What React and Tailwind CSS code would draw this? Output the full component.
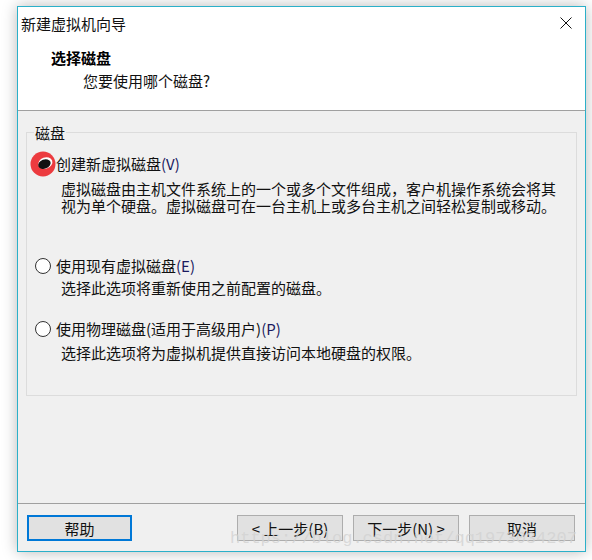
import React from 'react'

const FONT = { fontFamily: '"Noto Sans CJK SC", "Noto Sans", sans-serif' }

function Radio() {
  return <span className="w-[16px] h-[16px] rounded-full border border-[#333333] bg-white shrink-0" />
}

function Marked() {
  // red annotation circle drawn over the selected radio
  return (
    <span className="relative w-[16px] h-[16px] shrink-0">
      <svg className="absolute -left-[5px] -top-[5px]" width="26" height="26" viewBox="0 0 26 26">
        <circle cx="13" cy="13" r="12.5" fill="#ec3b3f" />
        <ellipse cx="15.3" cy="12.2" rx="7.2" ry="5.6" fill="#ffffff" transform="rotate(-20 15 12)" />
        <ellipse cx="14.4" cy="13.2" rx="6.4" ry="4.6" fill="#111111" transform="rotate(-20 14 13)" />
      </svg>
    </span>
  )
}

function Option({ selected, label, hotkey, children, className = '', descClass = '' }) {
  return (
    <div className={className}>
      <div className="flex items-center gap-[5px] pl-[8px] h-[17px]">
        {selected ? <Marked /> : <Radio />}
        <span className="text-[#111] whitespace-nowrap">
          {label}
          <span className="text-[#1a1a60]">{hotkey}</span>
        </span>
      </div>
      <p className={`pl-[34px] text-[#111] whitespace-nowrap ${descClass}`}>{children}</p>
    </div>
  )
}

function Button({ children, primary, className = '' }) {
  return (
    <div
      className={`h-[26px] flex items-center justify-center bg-[#e1e1e1] text-[#111] ${
        primary ? 'border-2 border-[#0078d7]' : 'border border-[#adadad]'
      } ${className}`}
    >
      {children}
    </div>
  )
}

export default function App() {
  return (
    <div className="relative w-[592px] h-[560px] bg-white overflow-hidden pt-[6px] pl-[17px] text-[15px] leading-[17px]" style={FONT}>
      <div className="w-[569px] h-[546px] border border-[#2bb0c9] bg-[#f0f0f0] flex flex-col shadow-[0_0_14px_rgba(0,0,0,0.28)]">
        {/* header */}
        <div className="h-[103px] bg-white shrink-0">
          <div className="h-[32px] flex items-center justify-between pl-[3px] pr-[13px]">
            <span className="text-[#111]">新建虚拟机向导</span>
            <svg width="12" height="12" viewBox="0 0 12 12">
              <path d="M0.5 0.5 L11.5 11.5 M11.5 0.5 L0.5 11.5" stroke="#111" strokeWidth="1" />
            </svg>
          </div>
          <div className="pl-[33px] pt-[10px] font-bold text-black">选择磁盘</div>
          <div className="pl-[65px] mt-[6px] text-[#111]">您要使用哪个磁盘?</div>
        </div>
        <div className="h-px bg-[#a0a0a0] shrink-0" />

        {/* body */}
        <div className="h-[392px] shrink-0 px-[8px] pt-[21px]">
          <div className="relative h-[264px] border border-[#dcdcdc] pt-[22px]">
            <span className="absolute left-[7px] -top-[9px] px-[1px] bg-[#f0f0f0] text-[#111]">磁盘</span>
            <Option selected label="创建新虚拟磁盘" hotkey="(V)" descClass="mt-[8px]">
              虚拟磁盘由主机文件系统上的一个或多个文件组成，客户机操作系统会将其
              <br />
              视为单个硬盘。虚拟磁盘可在一台主机上或多台主机之间轻松复制或移动。
            </Option>
            <Option label="使用现有虚拟磁盘" hotkey="(E)" className="mt-[43px]" descClass="mt-[5px]">
              选择此选项将重新使用之前配置的磁盘。
            </Option>
            <Option label="使用物理磁盘(适用于高级用户)" hotkey="(P)" className="mt-[24px]" descClass="mt-[7px]">
              选择此选项将为虚拟机提供直接访问本地硬盘的权限。
            </Option>
          </div>
        </div>
        <div className="h-px bg-[#a0a0a0] shrink-0" />

        {/* footer */}
        <div className="flex-1 flex justify-between pl-[9px] pr-[10px] pt-[11px]">
          <Button primary className="w-[105px]">帮助</Button>
          <div className="flex gap-[10px]">
            <Button className="w-[106px]">&lt; 上一步(B)</Button>
            <Button className="w-[106px]">下一步(N) &gt;</Button>
            <Button className="w-[106px]">取消</Button>
          </div>
        </div>
      </div>

      {/* blog watermark lying over the footer */}
      <span
        className="absolute left-[230px] top-[529px] text-[17px] leading-[20px] text-[#d2d2d2]/80 whitespace-nowrap"
        style={{ fontFamily: '"Liberation Mono", monospace' }}
      >
        https://blog.csdn.net/qq1973034207
      </span>
    </div>
  )
}
